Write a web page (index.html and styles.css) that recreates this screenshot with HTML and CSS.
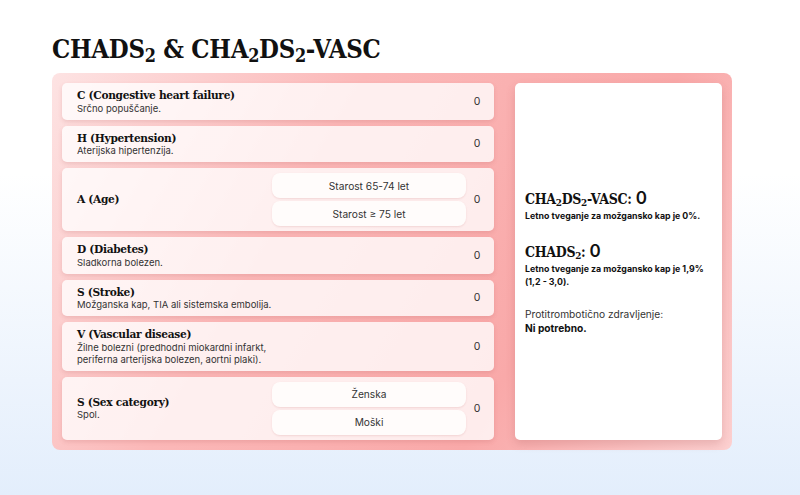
FILE: index.html
```html
<!DOCTYPE html>
<html lang="sl">

<head>
    <meta charset="UTF-8">
    <meta name="viewport" content="width=device-width, initial-scale=1.0">
    <title>CHADS2 &amp; CHA2DS2-VASC</title>
    <link rel="stylesheet" href="styles.css">
</head>

<body>
    <div class="page">
        <h1 class="title">CHADS<sub>2</sub> &amp; CHA<sub>2</sub>DS<sub>2</sub>-VASC</h1>

        <div class="panel">
            <div class="criteria">
                <div class="row">
                    <div class="label">
                        <div class="name">C (Congestive heart failure)</div>
                        <div class="desc">Srčno popuščanje.</div>
                    </div>
                    <div class="score">0</div>
                </div>

                <div class="row">
                    <div class="label">
                        <div class="name">H (Hypertension)</div>
                        <div class="desc">Aterijska hipertenzija.</div>
                    </div>
                    <div class="score">0</div>
                </div>

                <div class="row row-options">
                    <div class="label">
                        <div class="name">A (Age)</div>
                    </div>
                    <div class="options">
                        <button class="option">Starost 65-74 let</button>
                        <button class="option">Starost ≥ 75 let</button>
                    </div>
                    <div class="score">0</div>
                </div>

                <div class="row">
                    <div class="label">
                        <div class="name">D (Diabetes)</div>
                        <div class="desc">Sladkorna bolezen.</div>
                    </div>
                    <div class="score">0</div>
                </div>

                <div class="row">
                    <div class="label">
                        <div class="name">S (Stroke)</div>
                        <div class="desc">Možganska kap, TIA ali sistemska embolija.</div>
                    </div>
                    <div class="score">0</div>
                </div>

                <div class="row">
                    <div class="label">
                        <div class="name">V (Vascular disease)</div>
                        <div class="desc">Žilne bolezni (predhodni miokardni infarkt,<br>periferna arterijska bolezen, aortni plaki).</div>
                    </div>
                    <div class="score">0</div>
                </div>

                <div class="row row-options">
                    <div class="label">
                        <div class="name">S (Sex category)</div>
                        <div class="desc">Spol.</div>
                    </div>
                    <div class="options">
                        <button class="option">Ženska</button>
                        <button class="option">Moški</button>
                    </div>
                    <div class="score">0</div>
                </div>
            </div>

            <div class="result">
                <div class="result-block">
                    <div class="result-title">CHA<sub>2</sub>DS<sub>2</sub>-VASC: <span class="result-num">0</span></div>
                    <div class="result-text">Letno tveganje za možgansko kap je 0%.</div>
                </div>
                <div class="result-block">
                    <div class="result-title">CHADS<sub>2</sub>: <span class="result-num">0</span></div>
                    <div class="result-text">Letno tveganje za možgansko kap je 1,9% (1,2 - 3,0).</div>
                </div>
                <div class="result-block">
                    <div class="therapy">Protitrombotično zdravljenje:</div>
                    <div class="therapy-value">Ni potrebno.</div>
                </div>
            </div>
        </div>
    </div>
</body>

</html>
```

FILE: styles.css
```css
:root {
    --text-color: #1a1a1a;
    --muted-color: #333;
    --slab: "DejaVu Serif Condensed", "DejaVu Serif", "Liberation Serif", serif;
    --sans: Inter, "Noto Sans", sans-serif;
}

html,
body {
    margin: 0;
    height: 100%;
}

body {
    font-family: var(--sans);
    color: var(--text-color);
    background: linear-gradient(180deg, #ffffff 0%, #ffffff 35%, #e3eefc 100%);
}

.page {
    padding: 34px 52px 0 52px;
    width: 680px;
}

.title {
    font-family: var(--slab);
    font-stretch: condensed;
    font-weight: bold;
    font-size: 25.5px;
    letter-spacing: -0.3px;
    margin: 0 0 9px 0;
    line-height: 30px;
    color: #111;
}

.title sub,
.result-title sub {
    font-size: 0.7em;
    vertical-align: -0.25em;
    line-height: 0;
}

.panel {
    display: flex;
    gap: 21px;
    padding: 10px;
    border-radius: 8px;
    background: linear-gradient(120deg, #fde3e3 0%, #fbb8b8 35%, #f9a9a9 70%, #fcd0d0 100%);
}

.criteria {
    display: flex;
    flex-direction: column;
    gap: 6px;
    width: 432px;
}

.row {
    display: flex;
    align-items: center;
    min-height: 36px;
    padding: 5px 12px 5px 15px;
    box-sizing: border-box;
    background: rgba(255, 255, 255, 0.78);
    border-radius: 5px;
    box-shadow: 0 2px 4px rgba(180, 80, 80, 0.18);
}

.label {
    flex: 1;
}

.name {
    font-family: var(--slab);
    font-stretch: condensed;
    font-weight: bold;
    font-size: 11.8px;
    letter-spacing: -0.3px;
    line-height: 14.5px;
    color: #111;
}

.desc {
    font-size: 9.5px;
    line-height: 12px;
    color: var(--muted-color);
}

.options {
    display: flex;
    flex-direction: column;
    gap: 3px;
    width: 194px;
    margin-right: 7px;
}

.option {
    height: 25px;
    border: none;
    border-radius: 8px;
    background: #fffcfb;
    font-family: var(--sans);
    font-size: 10.2px;
    color: #333;
    box-shadow: 0 1px 2px rgba(180, 80, 80, 0.15);
    cursor: pointer;
}

.score {
    width: 8px;
    text-align: center;
    font-size: 10.5px;
    color: #333;
    margin-right: 1px;
}

.result {
    flex: 1;
    display: flex;
    flex-direction: column;
    justify-content: center;
    gap: 19px;
    padding: 0 10px;
    background: #fff;
    border-radius: 5px;
    box-shadow: 0 4px 10px rgba(150, 60, 60, 0.2);
}

.result-title {
    font-family: var(--slab);
    font-stretch: condensed;
    font-weight: bold;
    font-size: 14px;
    letter-spacing: -0.3px;
    line-height: 20px;
    color: #111;
}

.result-num {
    font-family: var(--sans);
    font-size: 17px;
    font-weight: 600;
}

.result-text {
    font-size: 8.8px;
    font-weight: bold;
    line-height: 13px;
    color: #111;
}

.therapy {
    font-size: 10.2px;
    line-height: 14px;
    color: #333;
}

.therapy-value {
    font-size: 10.2px;
    font-weight: bold;
    line-height: 14px;
    color: #111;
}
```
